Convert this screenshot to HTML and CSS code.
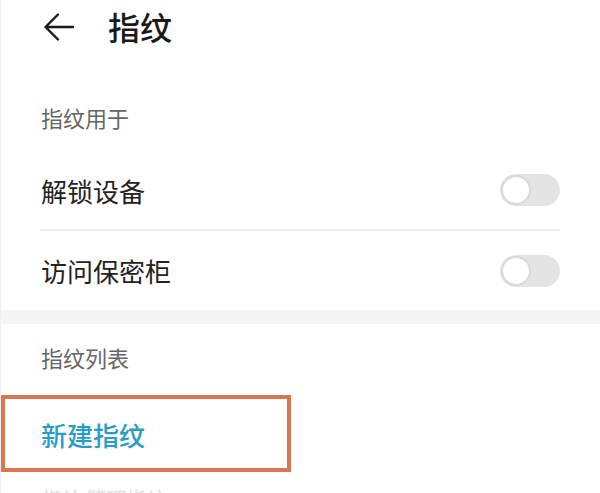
FILE: index.html
```html
<!DOCTYPE html>
<html lang="zh">
<head>
<meta charset="utf-8">
<link rel="stylesheet" href="styles.css">
</head>
<body>
<div class="page">
  <header class="header">
    <svg class="back" width="32" height="30" viewBox="0 0 32 30">
      <path d="M30 15 H2.5 M15 2.5 L2.5 15 L15 27.5" fill="none" stroke="#1a1a1a" stroke-width="2.4" stroke-linecap="round" stroke-linejoin="round"/>
    </svg>
    <h1 class="title">指纹</h1>
  </header>

  <div class="label label-first">指纹用于</div>
  <div class="group">
    <div class="row row-divided">
      <span class="row-text">解锁设备</span>
      <span class="switch"><span class="knob"></span></span>
    </div>
    <div class="row">
      <span class="row-text">访问保密柜</span>
      <span class="switch"><span class="knob"></span></span>
    </div>
  </div>

  <div class="band"></div>

  <div class="label label-second">指纹列表</div>
  <div class="action">
    <span class="action-text">新建指纹</span>
    <span class="highlight"></span>
  </div>
  <div class="faint">指纹 管理指纹</div>
</div>
</body>
</html>
```

FILE: styles.css
```css
html, body {
  margin: 0;
  padding: 0;
  background: #ffffff;
}

body {
  width: 600px;
  height: 493px;
  overflow: hidden;
  font-family: "Noto Sans CJK SC", "Noto Sans", sans-serif;
}

.page {
  border-left: 1px solid #eeeeee;
  min-height: 493px;
  box-sizing: border-box;
}

.header {
  height: 52px;
  display: flex;
  align-items: center;
  padding-left: 42px;
}

.back {
  display: block;
  margin-top: 1px;
}

.title {
  margin: 0 0 0 33px;
  font-size: 32px;
  font-weight: 500;
  color: #1a1a1a;
  line-height: 40px;
}

.label {
  font-size: 22px;
  line-height: 30px;
  color: #666666;
  padding-left: 40px;
}

.label-first {
  padding-top: 50px;
  padding-bottom: 19px;
}

.label-second {
  padding-top: 18px;
  padding-bottom: 23px;
}

.group {
  margin: 0 40px 0 39px;
}

.row {
  height: 79px;
  display: flex;
  align-items: center;
  justify-content: space-between;
}

.row-divided {
  border-bottom: 2px solid #eeeeee;
  height: 78px;
}

.row-text {
  font-size: 26px;
  color: #222222;
  padding-left: 1px;
}

.switch {
  width: 60px;
  height: 32px;
  border-radius: 16px;
  background: #e4e4e4;
  display: flex;
  align-items: center;
  padding-left: 1px;
  box-sizing: border-box;
}

.knob {
  width: 30px;
  height: 30px;
  border-radius: 50%;
  background: #ffffff;
  box-sizing: border-box;
  border: 2px solid #d9d9d9;
}

.band {
  height: 14px;
  background: #f5f5f5;
}

.action {
  position: relative;
  height: 77px;
  display: flex;
  align-items: center;
  padding-left: 40px;
}

.action-text {
  font-size: 26px;
  color: #2a9bc5;
  font-weight: 500;
  margin-top: 1px;
}

.highlight {
  position: absolute;
  left: 0;
  top: 0;
  width: 290px;
  height: 77px;
  box-sizing: border-box;
  border: 4px solid #d9784f;
}

.faint {
  padding-left: 41px;
  margin-top: 14px;
  font-size: 20px;
  line-height: 26px;
  color: #e2e2e2;
}
```
